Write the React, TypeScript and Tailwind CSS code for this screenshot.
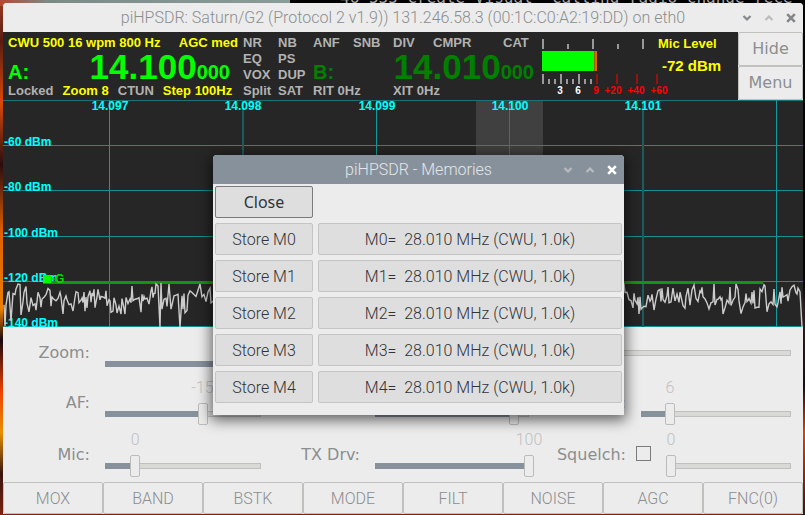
import React, { useState } from "react";

const SANS = "font-['Liberation_Sans',sans-serif]";
const ROBOTO = "font-['Roboto',sans-serif] font-light";
const DEJAVU = "font-['DejaVu_Sans',sans-serif]";

/* ---------- window chrome ---------- */

function WindowButtons({ close, dim, gap }: { close: string; dim: string; gap: string }) {
  return (
    <div className={"flex items-center " + gap}>
      <button aria-label="Minimize" className="flex size-3 items-center justify-center">
        <svg width="10" height="10" viewBox="0 0 10 10" fill="none" stroke={dim} strokeWidth="2.2">
          <path d="M1.5 3 L5 6.5 L8.5 3" />
        </svg>
      </button>
      <button aria-label="Maximize" className="flex size-3 items-center justify-center">
        <svg width="10" height="10" viewBox="0 0 10 10" fill="none" stroke="#b9bcbe" strokeWidth="2.2">
          <path d="M1.5 7 L5 3.5 L8.5 7" />
        </svg>
      </button>
      <button aria-label="Close window" className="flex size-3 items-center justify-center">
        <svg width="10" height="10" viewBox="0 0 10 10" fill="none" stroke={close} strokeWidth="2.6">
          <path d="M1.2 1.2 L8.8 8.8 M8.8 1.2 L1.2 8.8" />
        </svg>
      </button>
    </div>
  );
}

/* ---------- VFO panel ---------- */

function Frequency({ name, main, rest, color }: { name: string; main: string; rest: string; color: string }) {
  return (
    <div className={"flex h-8 items-baseline justify-between leading-8 " + color}>
      <span className="text-[20px]">{name}</span>
      <span className="text-[20px]">
        <span className="text-[35px]">{main}</span>
        {rest}
      </span>
    </div>
  );
}

function VfoPanel() {
  const modes = ["NR", "NB", "EQ", "PS", "VOX", "DUP", "Split", "SAT"];
  return (
    <div className={"flex min-w-0 flex-1 pt-[3px] pl-[5px] text-[13px] leading-4 font-bold whitespace-pre text-[#b2b2b2] " + SANS}>
      <div className="flex w-[235px] flex-col pr-[5px]">
        <div className="flex justify-between text-[#ffff00]">
          <span>CWU 500 16 wpm 800 Hz</span>
          <span>AGC med</span>
        </div>
        <div className="pr-2">
          <Frequency name="A:" main="14.100" rest="000" color="text-[#00ff00]" />
        </div>
        <div className="flex gap-[9px]">
          <span>Locked</span>
          <span className="text-[#ffff00]">Zoom 8</span>
          <span>CTUN</span>
          <span className="text-[#ffff00]">Step 100Hz</span>
        </div>
      </div>
      <div className="grid w-[70px] grid-cols-2 content-start">
        {modes.map((m) => (
          <span key={m}>{m}</span>
        ))}
      </div>
      <div className="flex w-[221px] flex-col">
        <div className="grid grid-cols-[40px_40px_40px_70px_31px]">
          <span>ANF</span>
          <span>SNB</span>
          <span>DIV</span>
          <span>CMPR</span>
          <span>CAT</span>
        </div>
        <Frequency name="B:" main="14.010" rest="000" color="text-[#008000]" />
        <div className="grid grid-cols-[80px_1fr]">
          <span>RIT 0Hz</span>
          <span>XIT 0Hz</span>
        </div>
      </div>
    </div>
  );
}

/* ---------- meter ---------- */

const METER_TALL = [6, 24, 42];
const METER_SHORT = [12, 18, 30, 36, 48, 54];
const METER_RED = [60, 80, 100, 120];
const METER_LABELS = [
  { x: 24, t: "3", c: "#ffffff" },
  { x: 42, t: "6", c: "#ffffff" },
  { x: 60, t: "9", c: "#ff0000" },
  { x: 77, t: "+20", c: "#ff0000" },
  { x: 100, t: "+40", c: "#ff0000" },
  { x: 123, t: "+60", c: "#ff0000" },
];

function Meter() {
  return (
    <div className="flex w-[202px] shrink-0">
      <svg width="138" height="67" viewBox="0 0 138 67" className="shrink-0">
        {[6, 56, 106].map((x) => (
          <rect key={x} x={x} y="7" width="2" height="10" fill="#999999" />
        ))}
        {[31, 81].map((x) => (
          <rect key={x} x={x} y="12" width="2" height="5" fill="#999999" />
        ))}
        <rect x="6" y="19" width="52" height="20" fill="#00ff00" />
        <rect x="58" y="19" width="1" height="20" fill="#a06000" />
        <rect x="59" y="19" width="2" height="20" fill="#e06800" />
        {METER_TALL.map((x) => (
          <rect key={x} x={x} y="42" width="2" height="10" fill="#999999" />
        ))}
        {METER_SHORT.map((x) => (
          <rect key={x} x={x} y="47" width="2" height="5" fill="#999999" />
        ))}
        {METER_RED.map((x) => (
          <rect key={x} x={x} y="42" width="2" height="10" fill="#931313" />
        ))}
        {METER_LABELS.map((l) => (
          <text key={l.t} x={l.x} y="62" textAnchor="middle" fill={l.c} fontSize="10" fontWeight="bold" fontFamily="'Liberation Sans', sans-serif">
            {l.t}
          </text>
        ))}
      </svg>
      <div className={"-ml-4 pt-1 font-bold whitespace-nowrap text-[#ffff00] " + SANS}>
        <p className="text-[13px] leading-4">Mic Level</p>
        <p className="pt-1 pl-1 text-[15px] leading-5">-72 dBm</p>
      </div>
    </div>
  );
}

/* ---------- spectrum ---------- */

function noiseTrace(): string {
  let seed = 20231;
  const rnd = () => {
    seed = (seed * 1103515245 + 12345) % 2147483648;
    return seed / 2147483648;
  };
  const spikes: Record<number, number> = {
    2: 226, 8: 221, 18: 215, 60: 214, 70: 211, 157: 227, 158: 183, 177: 227, 166: 184,
    625: 217, 650: 220, 651: 210, 667: 212, 734: 212, 762: 186, 798: 216, 799: 227,
  };
  const points: string[] = [];
  let level = 197;
  for (let x = 1; x < 800; x += 1) {
    level += (197 - level) * 0.2 + (rnd() - 0.5) * 10;
    let y = level + (x % 2 ? -1 : 1) * rnd() * 9 + (rnd() - 0.5) * 6;
    if (rnd() > 0.95) y += 11;
    y = Math.max(184, Math.min(214, y));
    if (spikes[x] !== undefined) y = spikes[x];
    points.push(x + "," + y.toFixed(1));
    if (rnd() > 0.45) x += 1;
  }
  return points.join(" ");
}

const TRACE = noiseTrace();
const FREQS = [
  { x: 106, t: "14.097", w: 1 },
  { x: 239, t: "14.098", w: 2 },
  { x: 373, t: "14.099", w: 1 },
  { x: 506, t: "14.100", w: 0 },
  { x: 639, t: "14.101", w: 2 },
  { x: 773, t: "", w: 1 },
];
const LEVELS = [
  { y: 45, t: "-60 dBm" },
  { y: 90, t: "-80 dBm" },
  { y: 136, t: "-100 dBm" },
  { y: 181, t: "-120 dBm" },
  { y: 226, t: "-140 dBm" },
];

function Spectrum() {
  return (
    <svg viewBox="0 0 800 227" className="block w-full bg-[#262626]" fontFamily="'Liberation Sans', sans-serif" fontSize="12" fontWeight="bold">
      <rect x="473" y="0" width="67" height="227" fill="#404040" />
      <rect x="0" y="0" width="800" height="1" fill="#1a7374" />
      {LEVELS.map((l) => (
        <rect key={l.y} x="0" y={l.y} width="800" height="1" fill="#149092" />
      ))}
      {FREQS.map((f) =>
        f.w === 0 ? (
          <rect key={f.x} x={f.x} y="0" width="1" height="227" fill="#9b4a4a" />
        ) : (
          <rect key={f.x} x={f.x} y="0" width={f.w} height="227" fill={f.w === 2 ? "#1c5c5d" : "#149a9c"} />
        )
      )}
      {FREQS.map((f) => (
        <text key={f.x} x={f.x + 1} y="10" textAnchor="middle" fill="#00ffff">
          {f.t}
        </text>
      ))}
      {LEVELS.map((l) => (
        <text key={l.y} x="1" y={l.y} dy="1" fill="#00ffff">
          {l.t}
        </text>
      ))}
      <rect x="40" y="181" width="720" height="3" fill="#149414" />
      <rect x="40" y="175" width="8" height="8" fill="#00ff00" />
      <text x="48" y="183" fill="#00dd00">
        -G
      </text>
      <polyline points={TRACE} fill="none" stroke="#cccccc" strokeWidth="1.4" />
    </svg>
  );
}

/* ---------- sliders ---------- */

interface SliderProps {
  id: string;
  min: number;
  max: number;
  initial: number;
  showValue?: boolean;
}

function Slider({ id, min, max, initial, showValue = true }: SliderProps) {
  const [value, setValue] = useState(initial);
  const percent = ((value - min) / (max - min)) * 100 + "%";
  return (
    <div className={"flex min-w-0 flex-1 flex-col gap-1 text-base leading-[22px] text-[#c0c1c1] " + ROBOTO + (showValue ? " pb-0.5" : "")}>
      {showValue && (
        <div className="relative h-[22px]">
          <output htmlFor={id} className="absolute -translate-x-1/2" style={{ left: percent }}>
            {value}
          </output>
        </div>
      )}
      <div className="relative flex h-[22px] items-center">
        <div className="h-1.5 w-full border border-[#c0c0bd] bg-[#d9d9d8]" />
        <div className="absolute left-0 h-1.5 bg-[#87919b]" style={{ width: percent }} />
        <input
          id={id}
          type="range"
          min={min}
          max={max}
          value={value}
          onChange={(e) => setValue(Number(e.target.value))}
          className="absolute inset-y-0 -left-[5px] m-0 h-[22px] w-[calc(100%+10px)] appearance-none bg-transparent [&::-webkit-slider-thumb]:h-[22px] [&::-webkit-slider-thumb]:w-[10px] [&::-webkit-slider-thumb]:appearance-none [&::-webkit-slider-thumb]:rounded-[2px] [&::-webkit-slider-thumb]:border [&::-webkit-slider-thumb]:border-[#bcbcb9] [&::-webkit-slider-thumb]:bg-[#ececec]"
        />
      </div>
    </div>
  );
}

function ControlLabel({ htmlFor, pad, children }: { htmlFor: string; pad: string; children: React.ReactNode }) {
  return (
    <label htmlFor={htmlFor} className={"pt-0.5 text-right " + pad}>
      {children}
    </label>
  );
}

const ROW = "col-span-full grid grid-cols-subgrid items-center";

function Controls() {
  const wide = "pr-[15px]";
  const narrow = "pr-[10px]";
  return (
    <div
      className={
        "grid grid-cols-[102px_156fr_114px_154fr_107px_155fr] grid-rows-[50px_50px_53px] pr-3 pb-0.5 text-base whitespace-nowrap text-[#8b8e8f] " +
        DEJAVU
      }
    >
      <div className={ROW}>
        <ControlLabel htmlFor="zoom" pad={wide}>Zoom:</ControlLabel>
        <Slider id="zoom" min={1} max={8} initial={8} />
        <ControlLabel htmlFor="pan" pad={wide}>Pan:</ControlLabel>
        <div className="col-span-3 flex pt-0.5">
          <Slider id="pan" min={0} max={100} initial={50} showValue={false} />
        </div>
      </div>
      <div className={ROW}>
        <ControlLabel htmlFor="af" pad={wide}>AF:</ControlLabel>
        <Slider id="af" min={-40} max={0} initial={-15} />
        <ControlLabel htmlFor="agc" pad={wide}>AGC:</ControlLabel>
        <Slider id="agc" min={-20} max={120} initial={106} />
        <ControlLabel htmlFor="att" pad={narrow}>ATT:</ControlLabel>
        <div className="flex pl-[5px]">
          <Slider id="att" min={0} max={31} initial={6} />
        </div>
      </div>
      <div className={ROW}>
        <ControlLabel htmlFor="mic" pad={wide}>Mic:</ControlLabel>
        <Slider id="mic" min={-12} max={50} initial={0} />
        <ControlLabel htmlFor="drive" pad={wide}>TX Drv:</ControlLabel>
        <Slider id="drive" min={0} max={100} initial={100} />
        <ControlLabel htmlFor="squelch-on" pad={narrow}>Squelch:</ControlLabel>
        <div className="flex items-center gap-5">
          <input id="squelch-on" type="checkbox" className="size-[15px] shrink-0 appearance-none border border-[#7b7b7b] checked:bg-[#87919b]" />
          <Slider id="squelch" min={0} max={100} initial={0} />
        </div>
      </div>
    </div>
  );
}

/* ---------- memories dialog ---------- */

const MEMORIES = ["M0", "M1", "M2", "M3", "M4"];
const KEY = "h-8 rounded-[2px] border bg-[#dedede] text-[#303438] ";

function MemoriesDialog() {
  return (
    <div
      role="dialog"
      aria-label="piHPSDR - Memories"
      className={"absolute top-[152px] left-[210px] w-[411px] rounded-t-[4px] bg-[#ececec] pb-3 text-base shadow-[0_3px_14px_2px_rgba(0,0,0,0.6)] " + ROBOTO}
    >
      <div className="grid h-[29px] grid-cols-[1fr_auto_1fr] items-center rounded-t-[4px] bg-[#87919b] px-1.5 text-[#e4e6e8]">
        <span />
        <span>piHPSDR - Memories</span>
        <div className="flex justify-end">
          <WindowButtons close="#ffffff" dim="#b9bcbe" gap="gap-2.5" />
        </div>
      </div>
      <div className="grid grid-cols-[98px_1fr] gap-x-[5px] gap-y-[5px] px-0.5 pt-0.5">
        <button className={KEY + "border-[#7b7b7b] font-['Noto_Sans',sans-serif] font-normal"}>Close</button>
        <span />
        {MEMORIES.map((m) => (
          <React.Fragment key={m}>
            <button className={KEY + "border-[#c4c4c4] pt-0.5"}>Store {m}</button>
            <button className={KEY + "border-[#c4c4c4] pt-0.5 whitespace-pre"}>{m + "=  28.010 MHz (CWU, 1.0k)"}</button>
          </React.Fragment>
        ))}
      </div>
    </div>
  );
}

/* ---------- application ---------- */

const TOOLBAR = ["MOX", "BAND", "BSTK", "MODE", "FILT", "NOISE", "AGC", "FNC(0)"];

export default function App() {
  return (
    <div className="relative overflow-hidden bg-[linear-gradient(180deg,#a03a20_0%,#5a1c10_8%,#d84a08_20%,#2a0c10_32%,#e06000_45%,#e88000_60%,#18080e_66%,#f04000_76%,#e89000_84%,#3a1410_92%,#7a2410_100%)] pt-[3px] pr-0.5 pb-px pl-[3px]">
      <div className="absolute inset-x-0 top-0 h-1.5 bg-[linear-gradient(90deg,#b04a30_0%,#7c8a86_6%,#8a9c98_36%,#000_36%)]" />
      <div className="absolute top-0 right-0 h-full w-1 bg-[linear-gradient(180deg,#050505_55%,#3a1a1c_60%,#1a0c10_75%,#e04000_84%,#3a1410_100%)]" />
      <p aria-hidden="true" className="absolute -top-3 left-[340px] font-['DejaVu_Sans_Mono',monospace] text-base leading-5 whitespace-pre text-[#a8a8a8]">
        46 535 Create Visual  Calling radio change rece
      </p>
      <main className="relative rounded-t-[4px] bg-[#ececec]">
        <header className={"grid h-[29px] grid-cols-[1fr_auto_1fr] items-center rounded-t-[4px] bg-[#ececec] px-1.5 text-base text-[#8b8e8f] " + ROBOTO}>
          <span />
          <h1>piHPSDR: Saturn/G2 (Protocol 2 v1.9)) 131.246.58.3 (00:1C:C0:A2:19:DD) on eth0</h1>
          <div className="flex justify-end">
            <WindowButtons close="#85888a" dim="#85888a" gap="gap-2.5" />
          </div>
        </header>
        <section className="flex h-[68px] bg-[#262626]">
          <VfoPanel />
          <Meter />
          <div className={"grid w-[65px] shrink-0 grid-rows-2 bg-[#ececec] text-base text-[#8b8e8f] " + DEJAVU}>
            <button className="rounded-[2px] border border-[#c0c0bd]">Hide</button>
            <button className="rounded-[2px] border border-[#c0c0bd]">Menu</button>
          </div>
        </section>
        <Spectrum />
        <Controls />
        <nav className={"grid h-8 grid-cols-8 text-base text-[#8b8e8f] " + ROBOTO}>
          {TOOLBAR.map((t) => (
            <button key={t} className="rounded-[2px] border border-[#c0c0bd] pt-0.5">
              {t}
            </button>
          ))}
        </nav>
        <MemoriesDialog />
      </main>
    </div>
  );
}
